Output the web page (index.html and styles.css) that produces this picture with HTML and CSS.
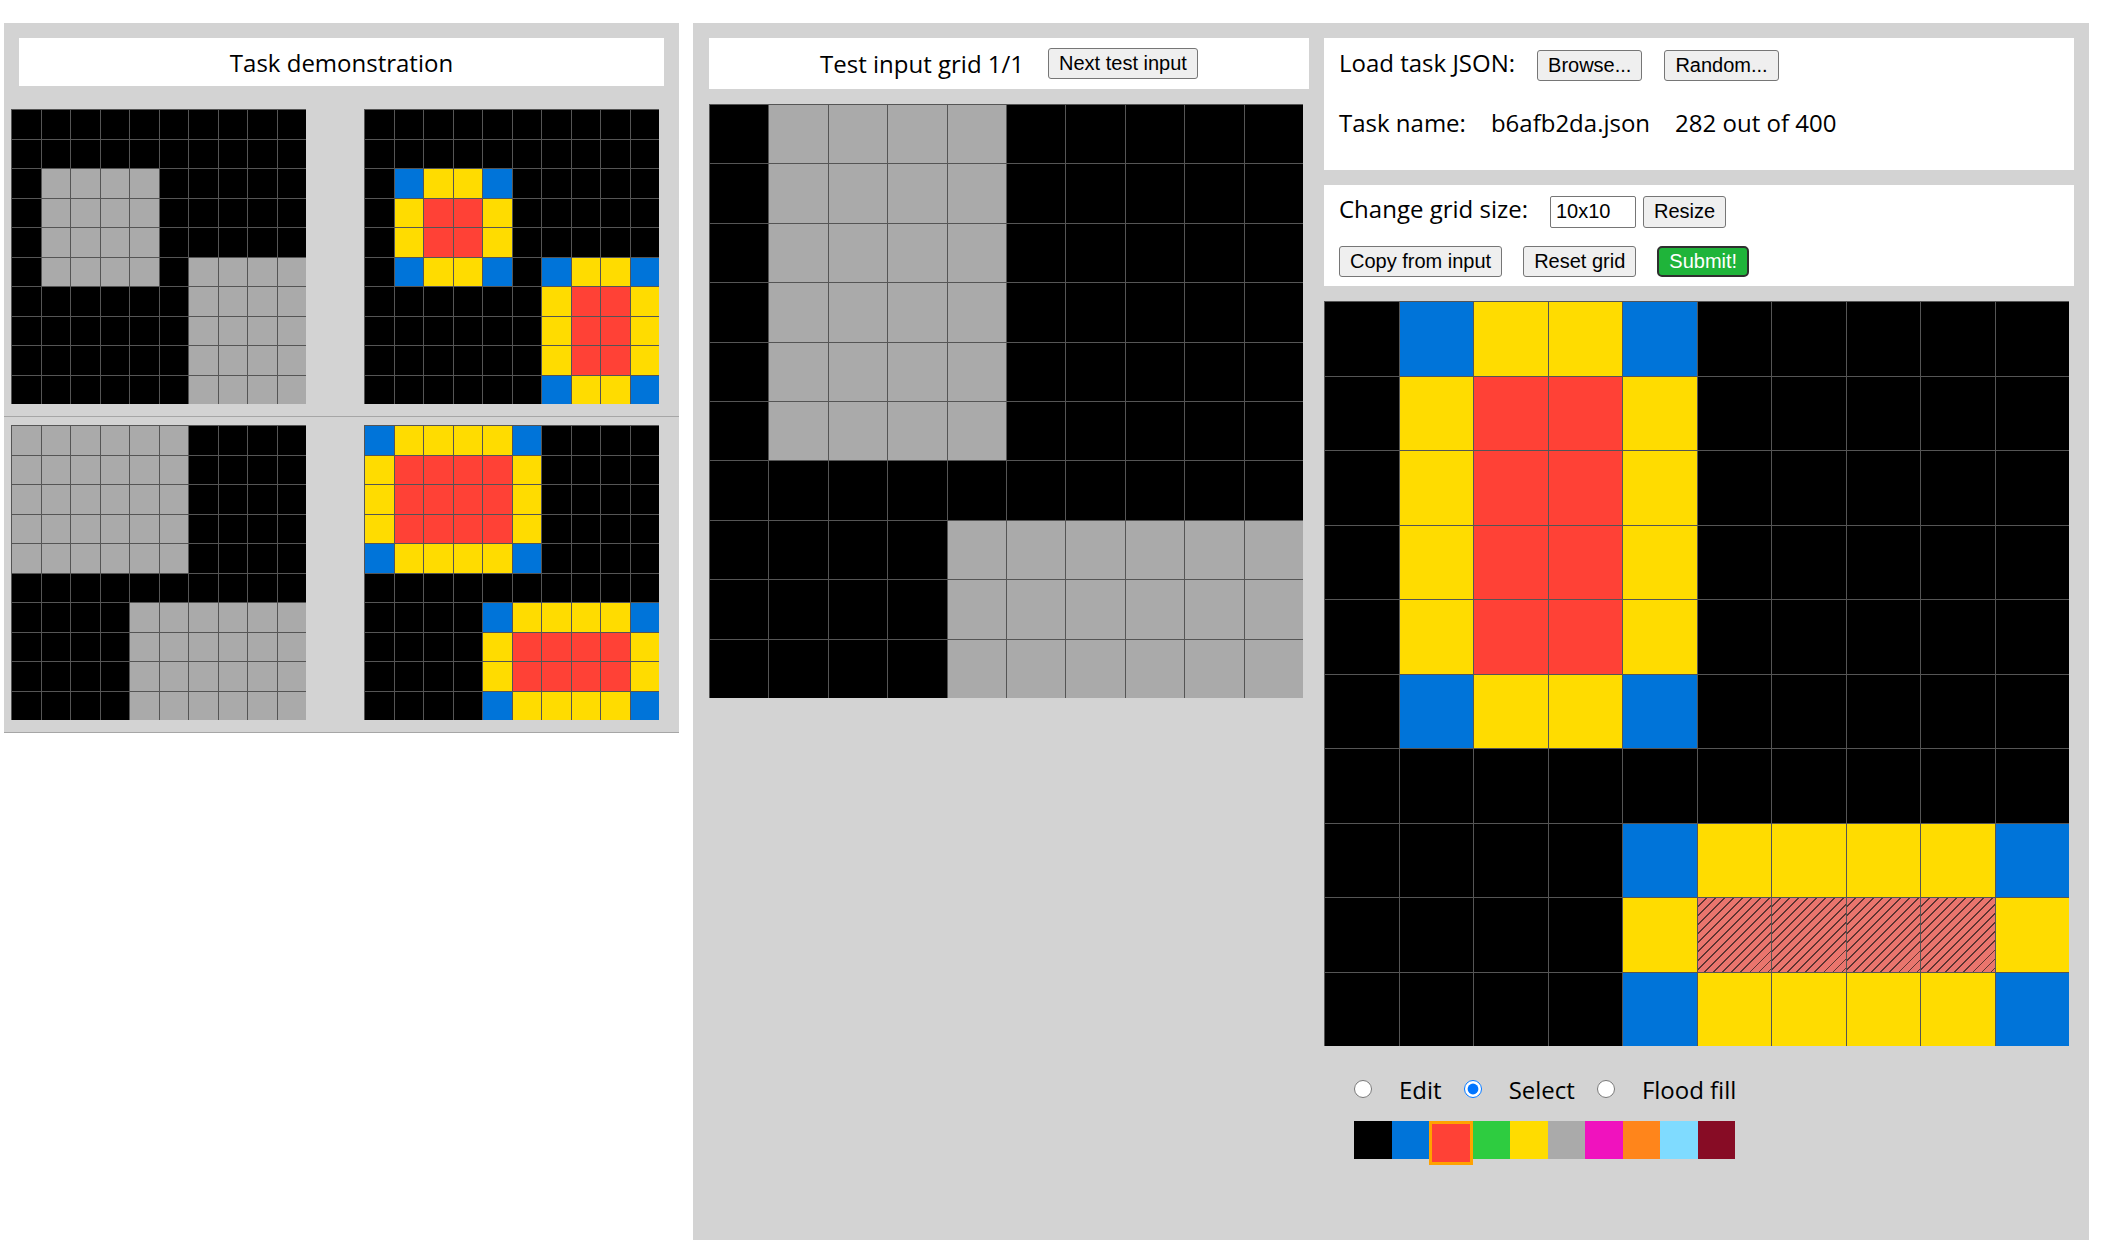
FILE: index.html
```html
<!DOCTYPE html>
<html lang="en">
<head>
<meta charset="utf-8">
<title>ARC testing interface</title>
<link rel="stylesheet" href="styles.css">
</head>
<body>
<div class="app">
  <section class="demo">
    <div class="panel-title">Task demonstration</div>
    <div class="pair">
      <div class="grid grid-sm" data-rows="0000000000 0000000000 0555500000 0555500000 0555500000 0555505555 0000005555 0000005555 0000005555 0000005555"></div>
      <div class="grid grid-sm" data-rows="0000000000 0000000000 0144100000 0422400000 0422400000 0144101441 0000004224 0000004224 0000004224 0000001441"></div>
    </div>
    <div class="pair">
      <div class="grid grid-sm" data-rows="5555550000 5555550000 5555550000 5555550000 5555550000 0000000000 0000555555 0000555555 0000555555 0000555555"></div>
      <div class="grid grid-sm" data-rows="1444410000 4222240000 4222240000 4222240000 1444410000 0000000000 0000144441 0000422224 0000422224 0000144441"></div>
    </div>
  </section>

  <section class="workspace">
    <div class="test-col">
      <div class="test-title">
        <span>Test input grid 1/1</span>
        <button class="btn" type="button">Next test input</button>
      </div>
      <div class="grid grid-md" data-rows="0555500000 0555500000 0555500000 0555500000 0555500000 0555500000 0000000000 0000555555 0000555555 0000555555"></div>
    </div>

    <div class="output-col">
      <div class="box load-box">
        <div class="row">
          <span class="label">Load task JSON:</span>
          <button class="btn" type="button">Browse...</button>
          <button class="btn btn-gap" type="button">Random...</button>
        </div>
        <div class="row info-row">
          <span>Task name:</span>
          <span class="info">b6afb2da.json</span>
          <span class="info">282 out of 400</span>
        </div>
      </div>

      <div class="box edit-box">
        <div class="row">
          <span class="label">Change grid size:</span>
          <input class="size-input" type="text" value="10x10">
          <button class="btn btn-tall" type="button">Resize</button>
        </div>
        <div class="actions">
          <button class="btn" type="button">Copy from input</button>
          <button class="btn" type="button">Reset grid</button>
          <button class="btn btn-submit" type="button">Submit!</button>
        </div>
      </div>

      <div class="grid grid-lg" data-rows="0144100000 0422400000 0422400000 0422400000 0422400000 0144100000 0000000000 0000144441 00004ssss4 0000144441"></div>

      <div class="modes">
        <input type="radio" name="mode" id="m-edit">
        <label for="m-edit">Edit</label>
        <input type="radio" name="mode" id="m-select" checked>
        <label for="m-select">Select</label>
        <input type="radio" name="mode" id="m-fill">
        <label for="m-fill">Flood fill</label>
      </div>

      <div class="palette">
        <div class="swatch c0"></div>
        <div class="swatch c1"></div>
        <div class="swatch c2 active"></div>
        <div class="swatch c3"></div>
        <div class="swatch c4"></div>
        <div class="swatch c5"></div>
        <div class="swatch c6"></div>
        <div class="swatch c7"></div>
        <div class="swatch c8"></div>
        <div class="swatch c9"></div>
      </div>
    </div>
  </section>
</div>
<script src="app.js"></script>
</body>
</html>
```

FILE: styles.css
```css
* { box-sizing: border-box; }

body {
  margin: 0;
  font-family: "Open Sans", "Noto Sans", sans-serif;
  color: #000;
  background: #fff;
  overflow: hidden;
}

.app {
  display: flex;
  align-items: flex-start;
  gap: 14px;
  padding: 23px 0 0 4px;
}

/* left: demonstration */
.demo {
  width: 675px;
  background: #d3d3d3;
}

.panel-title {
  background: #fff;
  margin: 15px;
  height: 48px;
  display: flex;
  align-items: center;
  justify-content: center;
  font-size: 24px;
}

.pair {
  display: flex;
  gap: 58px;
  padding: 8px 0 12px 7px;
  border-bottom: 1px solid #a6a6a6;
}

/* grids */
.grid {
  display: grid;
  grid-template-columns: repeat(10, 1fr);
  grid-template-rows: repeat(10, 1fr);
}
.grid-sm { width: 295px; height: 295px; }
.grid-md { width: 594px; height: 594px; margin-top: 15px; }
.grid-lg { width: 745px; height: 745px; margin-top: 15px; }

.cell {
  border-top: 1px solid #555;
  border-left: 1px solid #555;
}
.cell.sel {
  background: repeating-linear-gradient(135deg, #ea756d 0 5.2px, #5e3431 5.2px 6.4px);
}

.c0 { background: #000000; }
.c1 { background: #0074d9; }
.c2 { background: #ff4136; }
.c3 { background: #2ecc40; }
.c4 { background: #ffdc00; }
.c5 { background: #aaaaaa; }
.c6 { background: #f012be; }
.c7 { background: #ff851b; }
.c8 { background: #7fdbff; }
.c9 { background: #870c25; }

/* right: workspace */
.workspace {
  width: 1396px;
  height: calc(100vh - 23px);
  background: #d3d3d3;
  display: flex;
  align-items: flex-start;
  gap: 15px;
  padding: 15px 15px 0 16px;
}

.test-col { width: 600px; }

.test-title {
  background: #fff;
  height: 51px;
  display: flex;
  align-items: center;
  justify-content: center;
  gap: 24px;
  font-size: 24px;
}

.output-col { width: 750px; }

.box {
  background: #fff;
  padding-left: 15px;
  font-size: 24px;
  line-height: 32px;
}
.box + .box { margin-top: 15px; }

.load-box { height: 132px; padding-top: 9px; }
.edit-box { height: 101px; padding-top: 8px; }

.row {
  display: flex;
  align-items: baseline;
}
.label { margin-right: 22px; }
.btn-gap { margin-left: 22px; }

.info-row { margin-top: 26px; }
.info { margin-left: 25px; }

.actions {
  display: flex;
  align-items: flex-start;
  gap: 21px;
  margin-top: 18px;
}

.btn {
  font-family: "Liberation Sans", Arial, sans-serif;
  font-size: 20px;
  height: 31px;
  padding: 0 10px;
  background: #efefef;
  color: #000;
  border: 1px solid #767676;
  border-radius: 3px;
  line-height: 29px;
}
.btn-tall { height: 32px; margin-left: 7px; }

.btn-submit {
  background: #1fb43a;
  color: #fff;
  border: 2px solid #2f2f2f;
  border-radius: 5px;
  line-height: 27px;
}

.size-input {
  width: 86px;
  height: 32px;
  font-family: "Liberation Sans", Arial, sans-serif;
  font-size: 20px;
  padding: 0 5px;
  border: 1px solid #767676;
  border-radius: 2px;
  color: #000;
  background: #fff;
}

.modes {
  display: flex;
  align-items: center;
  height: 32px;
  margin-top: 27px;
  padding-left: 30px;
  font-size: 24px;
}
.modes input {
  width: 18px;
  height: 18px;
  margin: 0 27px 0 0;
}
.modes label { margin-right: 22px; }

.palette {
  display: flex;
  align-items: flex-start;
  margin-top: 16px;
  margin-left: 30px;
}
.swatch {
  width: 37.5px;
  height: 37.5px;
}
.swatch.active {
  width: 43.5px;
  height: 43.5px;
  border: 3px solid #ffa200;
}
```

FILE: app.js
```js
document.querySelectorAll('.grid[data-rows]').forEach(function (grid) {
  grid.dataset.rows.split(' ').forEach(function (row) {
    row.split('').forEach(function (ch) {
      var cell = document.createElement('div');
      if (ch === 's') {
        cell.className = 'cell c2 sel';
      } else {
        cell.className = 'cell c' + ch;
      }
      grid.appendChild(cell);
    });
  });
});
```
